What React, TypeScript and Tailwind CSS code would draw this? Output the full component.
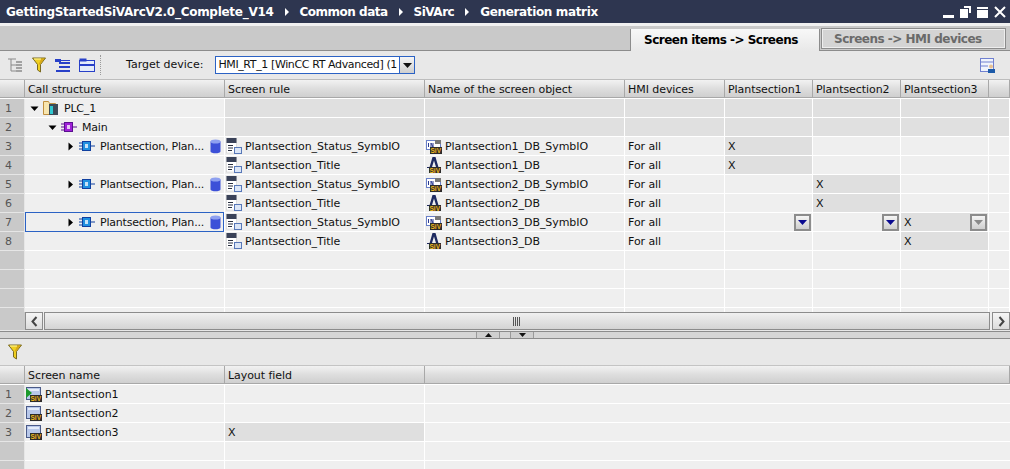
import React from "react";

const font = { fontFamily: '"DejaVu Sans", sans-serif' };

const Caret = ({ open }: { open?: boolean }) => (
  <svg width="9" height="9" viewBox="0 0 9 9" className="shrink-0">
    {open ? <path d="M0.5 2.5h8L4.5 7z" fill="#000" /> : <path d="M2.5 0.5v8L7 4.5z" fill="#000" />}
  </svg>
);

const Sep = () => (
  <svg width="4" height="8" viewBox="0 0 4 8" className="shrink-0 mx-[11px]">
    <path d="M0 0l4 4-4 4z" fill="#fff" />
  </svg>
);

const Siv = ({ x = 0, y = 9, w = 11 }: { x?: number; y?: number; w?: number }) => (
  <g>
    <rect x={x} y={y} width={w} height="7" fill="#2c2c2c" />
    <text x={x + 0.5} y={y + 6} fontSize="6.5" fontWeight="700" fill="#f0b820" fontFamily="Liberation Sans">
      SiV
    </text>
  </g>
);

const PlcIcon = () => (
  <svg width="16" height="16" viewBox="0 0 16 16" className="shrink-0">
    <path d="M0.5 1.5h5l1 2h6v11h-12z" fill="#f8e6b0" stroke="#c09040" />
    <rect x="6" y="4" width="9" height="11" fill="#3c4a58" />
    <rect x="7" y="6" width="3" height="8" fill="#30c8d0" />
  </svg>
);

const BlockIcon = ({ color, dark }: { color: string; dark: string }) => (
  <svg width="16" height="10" viewBox="0 0 16 10" className="shrink-0">
    <path d="M0 2h4M0 5h4M0 8h4M11 5h5" stroke={dark} strokeWidth="1.2" />
    <rect x="3.5" y="0.5" width="8" height="9" fill={color} stroke={dark} />
    <rect x="6" y="3" width="3" height="4" fill="#fff" opacity="0.75" />
  </svg>
);

const DbIcon = () => (
  <svg width="11" height="15" viewBox="0 0 11 15" className="shrink-0">
    <path d="M0.5 2.5v10c0 2.4 10 2.4 10 0v-10z" fill="#3c50d8" />
    <ellipse cx="5.5" cy="2.5" rx="5" ry="2" fill="#8ea0f0" />
  </svg>
);

const RuleIcon = () => (
  <svg width="16" height="16" viewBox="0 0 16 16" className="shrink-0">
    <rect x="0.5" y="0" width="10" height="15" fill="#fff" stroke="#c8c8c8" strokeWidth="0.5" />
    <rect x="0.5" y="0" width="10" height="5" fill="#3a4258" />
    <path d="M2 7.5h5M2 10h5M2 12.5h4" stroke="#2a3040" strokeWidth="1.2" />
    <rect x="8.5" y="9.5" width="7" height="6" fill="#dce6f6" stroke="#5878b8" />
  </svg>
);

const IoIcon = () => (
  <svg width="16" height="16" viewBox="0 0 16 16" className="shrink-0">
    <rect x="0.5" y="2.5" width="14" height="9" fill="#fff" stroke="#6a80c8" />
    <path d="M2.5 5v4M5 9V5l2 4V5" stroke="#2a3a90" fill="none" />
    <rect x="9" y="2" width="6" height="4" fill="#777" />
    <Siv x={4} y={9} w={12} />
  </svg>
);

const TextIcon = () => (
  <svg width="16" height="16" viewBox="0 0 16 16" className="shrink-0">
    <path d="M3 12L6.5 0h3L13 12h-2.4L8 3.5 5.4 12z" fill="#1e2a60" />
    <rect x="1" y="10" width="14" height="1" fill="#1e2a60" />
    <Siv x={3} y={10} w={12} />
  </svg>
);

const ScreenIcon = ({ start }: { start?: boolean }) => (
  <svg width="16" height="15" viewBox="0 0 16 15" className="shrink-0">
    <rect x="0.5" y="0.5" width="14" height="12" fill="#b8c8ea" stroke="#4a5a88" />
    <rect x="2" y="2" width="11" height="2" fill="#e4ecfa" />
    {start && <path d="M0 1l6 5-6 5z" fill="#1c9a2c" />}
    <Siv x={4} y={8} w={12} />
  </svg>
);

const Funnel = () => (
  <svg width="15" height="16" viewBox="0 0 15 16">
    <path d="M0.5 1h13L8.5 7.5V15l-3-2V7.5z" fill="#f0d020" stroke="#7a6a20" />
    <path d="M8 7.5L12.5 1.5H9.5L6.5 7.5z" fill="#d8a818" />
    <path d="M2 2h7" stroke="#fff6a0" />
  </svg>
);

const Cell = ({ hl, soft, children, className = "" }: { hl?: boolean; soft?: boolean; children?: React.ReactNode; className?: string }) => (
  <div
    className={`flex items-center h-[19px] border-r border-b border-white pl-[3px] min-w-0 relative whitespace-nowrap ${
      hl ? "bg-[#dfdfdf]" : soft ? "bg-[#e0e0e0]" : "bg-[#efefef]"
    } ${className}`}
  >
    {children}
  </div>
);

const T = ({ children, className = "" }: { children: React.ReactNode; className?: string }) => (
  <span className={`pt-[2px] tracking-[-0.06px] ${className}`}>{children}</span>
);

const RowNum = ({ n }: { n?: number }) => (
  <div className="h-[19px] bg-[#c9c9c9] border-r border-b border-[#e6e6e6] pl-[5px] pt-[2px] flex items-center text-[#555] text-[11px]">{n}</div>
);

const Head = ({ children }: { children?: React.ReactNode }) => (
  <div className="h-[18px] mb-px flex items-center pl-[3px] pt-[3px] border-r border-b border-[#a8a8a8] whitespace-nowrap tracking-[-0.06px] bg-gradient-to-b from-[#f2f2f2] via-[#dedede] to-[#cfcfcf]">
    {children}
  </div>
);

const DropBtn = ({ dim }: { dim?: boolean }) => (
  <div className="absolute right-[1px] top-[1px] w-[17px] h-[17px] border-2 border-[#8c8c8c] bg-gradient-to-b from-[#f5f5f5] to-[#cfcfcf] flex items-center justify-center">
    <svg width="9" height="5" viewBox="0 0 9 5">
      <path d="M0 0h9L4.5 5z" fill={dim ? "#8a8a8a" : "#0a0a90"} />
    </svg>
  </div>
);

const Tree = ({ indent, icon, label, db, selected }: { indent: number; icon: React.ReactNode; label: string; db?: boolean; selected?: boolean }) => (
  <div className="flex items-center h-[19px] border-r border-b border-white bg-[#efefef] min-w-0 relative whitespace-nowrap">
    <div style={{ width: indent }} className="shrink-0" />
    <Caret open={indent < 30} />
    <div className="ml-[4px] flex items-center">{icon}</div>
    <T className="ml-[5px] flex-1 overflow-hidden !tracking-[-0.2px]">{label}</T>
    {db && (
      <div className="mr-[3px]">
        <DbIcon />
      </div>
    )}
    {selected && <div className="absolute -top-px left-0 right-0 bottom-[-1px] border border-[#2b62c4]" />}
  </div>
);

const topCols = "grid-cols-[25px_200px_200px_200px_100px_88px_88px_88px_21px]";
const matrix = [
  { s: "Plantsection_Status_SymbIO", n: "Plantsection1_DB_SymbIO", io: true, hit: 0 },
  { s: "Plantsection_Title", n: "Plantsection1_DB", io: false, hit: 0 },
  { s: "Plantsection_Status_SymbIO", n: "Plantsection2_DB_SymbIO", io: true, hit: 1 },
  { s: "Plantsection_Title", n: "Plantsection2_DB", io: false, hit: 1 },
  { s: "Plantsection_Status_SymbIO", n: "Plantsection3_DB_SymbIO", io: true, hit: 2 },
  { s: "Plantsection_Title", n: "Plantsection3_DB", io: false, hit: 2 },
];

export default function App() {
  return (
    <div style={font} className="w-[1010px] h-[469px] overflow-hidden bg-[#e8e8e8] text-[11px] text-[#111] flex flex-col">
      {/* title bar */}
      <div className="h-[23px] bg-[#2e3650] text-white flex items-center pl-[6px] text-[12px] font-bold tracking-[-0.5px] whitespace-nowrap shrink-0">
        <span className="tracking-[-0.28px]">GettingStartedSiVArcV2.0_Complete_V14</span>
        <Sep />
        <span>Common data</span>
        <Sep />
        <span>SiVArc</span>
        <Sep />
        <span className="tracking-[-0.35px]">Generation matrix</span>
        <div className="ml-auto mr-[4px] flex items-center gap-[6px]">
          <svg width="11" height="12" viewBox="0 0 11 12"><rect x="0" y="9" width="11" height="3" fill="#fff" /></svg>
          <svg width="11" height="12" viewBox="0 0 11 12"><path d="M4 0h7v7h-2V2H4z" fill="#fff" /><rect x="0" y="3" width="8" height="9" fill="#fff" /></svg>
          <svg width="11" height="12" viewBox="0 0 11 12"><rect x="0" y="1" width="11" height="2" fill="#fff" /><rect x="0" y="4" width="11" height="8" fill="#fff" /></svg>
          <svg width="12" height="12" viewBox="0 0 12 12"><path d="M1 1l10 10M11 1L1 11" stroke="#fff" strokeWidth="2" /></svg>
        </div>
      </div>
      <div className="h-[3px] bg-[#f0f0f0] shrink-0" />

      {/* tab strip */}
      <div className="h-[25px] bg-[#c9c9c9] border-b border-[#8c8c8c] flex justify-end items-end pr-[4px] shrink-0 font-bold text-[12px] tracking-[-0.5px]">
        <div className="h-[22px] w-[190px] -mb-px bg-gradient-to-b from-[#f8f8f8] to-[#e8e8e8] border-l border-r border-[#8c8c8c] flex items-center pl-[13px] text-black">
          Screen items -&gt; Screens
        </div>
        <div className="h-[21px] w-[185px] ml-[1px] mb-[1px] border border-[#8c8c8c] shadow-[inset_0_0_0_1px_#eeeeee] bg-[#d4d4d4] flex items-center pl-[12px] text-[#6a6a6a]">
          Screens -&gt; HMI devices
        </div>
      </div>

      {/* toolbar */}
      <div className="h-[28px] flex items-center pl-[7px] shrink-0">
        <svg width="16" height="15" viewBox="0 0 16 15">
          <path d="M1 1h8M4 1v12h5M4 7h5" stroke="#8a8a8a" fill="none" />
          <path d="M9 4h6M9 7h6M9 10h6M9 13h6" stroke="#8a8a8a" strokeWidth="1.5" />
        </svg>
        <div className="ml-[9px]"><Funnel /></div>
        <svg className="ml-[8px]" width="16" height="15" viewBox="0 0 16 15">
          <rect x="0" y="1" width="6" height="3" fill="#2840c8" />
          <path d="M4 5h11M4 9h11M1 13h14" stroke="#2840c8" strokeWidth="2" />
          <path d="M6 2.5h9" stroke="#2840c8" strokeWidth="1" />
        </svg>
        <svg className="ml-[8px]" width="16" height="14" viewBox="0 0 16 14">
          <rect x="0.5" y="2.5" width="15" height="11" fill="#e4ecfa" stroke="#2840c8" />
          <rect x="0.5" y="0.5" width="7" height="3" fill="#2840c8" />
          <path d="M1 7h14" stroke="#2840c8" strokeWidth="2" />
        </svg>
        <div className="h-[20px] border-l border-dotted border-[#9a9a9a] ml-[5px]" />
        <span className="ml-[25px]">Target device:</span>
        <div className="ml-[12px] w-[200px] h-[18px] border border-[#2b62c4] bg-white flex items-center pl-[2px] whitespace-nowrap overflow-hidden">
          <span className="flex-1 tracking-[-0.38px]">HMI_RT_1 [WinCC RT Advanced] (1</span>
          <div className="w-[15px] h-[16px] border-l border-[#2b62c4] bg-gradient-to-b from-[#f5f5f5] to-[#cfcfcf] flex items-center justify-center shrink-0">
            <svg width="9" height="5" viewBox="0 0 9 5"><path d="M0 0h9L4.5 5z" fill="#111" /></svg>
          </div>
        </div>
        <svg className="ml-auto mr-[15px]" width="15" height="15" viewBox="0 0 15 15">
          <rect x="0.5" y="0.5" width="13" height="13" fill="#f0f4fc" stroke="#7080d0" />
          <path d="M1 4h12M1 8h7" stroke="#7080d0" />
          <circle cx="11" cy="8.5" r="2" fill="#e8c090" />
          <rect x="8" y="11" width="7" height="4" fill="#1c5aa8" />
        </svg>
      </div>

      {/* matrix */}
      <div className={`grid ${topCols} content-start h-[233px] overflow-hidden shrink-0 border-t border-[#bdbdbd] bg-white`}>
        <Head />
        <Head>Call structure</Head>
        <Head>Screen rule</Head>
        <Head>Name of the screen object</Head>
        <Head>HMI devices</Head>
        <Head>Plantsection1</Head>
        <Head>Plantsection2</Head>
        <Head>Plantsection3</Head>
        <Head />

        <RowNum n={1} />
        <Tree indent={5} icon={<PlcIcon />} label="PLC_1" />
        {[0, 1, 2, 3, 4, 5, 6].map((c) => <Cell key={c} soft />)}

        <RowNum n={2} />
        <Tree indent={23} icon={<BlockIcon color="#a020d8" dark="#5a1090" />} label="Main" />
        {[0, 1, 2, 3, 4, 5, 6].map((c) => <Cell key={c} soft />)}

        {matrix.map((row, i) => (
          <React.Fragment key={i}>
            <RowNum n={i + 3} />
            {i % 2 === 0 ? (
              <Tree indent={41} icon={<BlockIcon color="#2090e0" dark="#1040a0" />} label="Plantsection, Plan..." db selected={i === 4} />
            ) : (
              <Cell />
            )}
            <Cell className="!pl-[1px]">
              <RuleIcon />
              <T className="ml-[3px]">{row.s}</T>
            </Cell>
            <Cell className="!pl-[1px]">
              {row.io ? <IoIcon /> : <TextIcon />}
              <T className="ml-[3px]">{row.n}</T>
            </Cell>
            <Cell><T>For all</T></Cell>
            {[0, 1, 2].map((c) => (
              <Cell key={c} hl={row.hit === c}>
                {row.hit === c && <T>X</T>}
                {i === 4 && <DropBtn dim={c === 2} />}
              </Cell>
            ))}
            <Cell />
          </React.Fragment>
        ))}

        {[0, 1, 2, 3].map((r) => (
          <React.Fragment key={r}>
            <RowNum />
            {[0, 1, 2, 3, 4, 5, 6, 7].map((c) => <Cell key={c} />)}
          </React.Fragment>
        ))}
      </div>

      {/* horizontal scrollbar */}
      <div className="h-[18px] flex shrink-0 bg-[#efefef]">
        <div className="w-[25px] bg-[#c9c9c9]" />
        <div className="w-[18px] border border-[#8c8c8c] bg-gradient-to-b from-[#f5f5f5] to-[#dcdcdc] flex items-center justify-center">
          <svg width="7" height="11" viewBox="0 0 7 11"><path d="M5.5 1L1.5 5.5l4 4.5" stroke="#444" strokeWidth="2" fill="none" /></svg>
        </div>
        <div className="flex-1 ml-[1px] border border-[#8c8c8c] bg-gradient-to-b from-[#f0f0f0] to-[#d4d4d4] flex items-center justify-center">
          <svg width="8" height="9" viewBox="0 0 8 9"><path d="M0.5 0v9M2.5 0v9M4.5 0v9M6.5 0v9" stroke="#555" /></svg>
        </div>
        <div className="w-[18px] ml-[2px] border border-[#8c8c8c] bg-gradient-to-b from-[#f5f5f5] to-[#dcdcdc] flex items-center justify-center">
          <svg width="7" height="11" viewBox="0 0 7 11"><path d="M1.5 1l4 4.5-4 4.5" stroke="#444" strokeWidth="2" fill="none" /></svg>
        </div>
      </div>
      <div className="h-[1px] bg-[#e8e8e8] shrink-0" />

      {/* splitter */}
      <div className="h-[8px] bg-[#d6d6d6] border-t border-b border-[#8c8c8c] flex justify-center shrink-0 gap-[10px]">
        <div className="w-[24px] h-[6px] bg-[#cfcfcf] border-x border-[#9a9a9a] flex items-center justify-center">
          <svg width="7" height="4" viewBox="0 0 7 4"><path d="M0 4h7L3.5 0z" fill="#111" /></svg>
        </div>
        <div className="w-[24px] h-[6px] bg-[#cfcfcf] border-x border-[#9a9a9a] flex items-center justify-center">
          <svg width="7" height="4" viewBox="0 0 7 4"><path d="M0 0h7L3.5 4z" fill="#111" /></svg>
        </div>
      </div>

      {/* lower toolbar */}
      <div className="h-[27px] flex items-center pl-[8px] shrink-0 border-b border-[#c4c4c4]">
        <Funnel />
      </div>

      {/* screens table */}
      <div className="grid grid-cols-[25px_200px_200px_585px] shrink-0 bg-white">
        <Head />
        <Head>Screen name</Head>
        <Head>Layout field</Head>
        <Head />
        {["Plantsection1", "Plantsection2", "Plantsection3"].map((name, i) => (
          <React.Fragment key={name}>
            <RowNum n={i + 1} />
            <Cell className="!pl-[1px]">
              <ScreenIcon start={i === 0} />
              <T className="ml-[3px]">{name}</T>
            </Cell>
            <Cell hl={i === 2}>{i === 2 && <T>X</T>}</Cell>
            <Cell className="!border-r-0" />
          </React.Fragment>
        ))}
        {[0, 1, 2].map((r) => (
          <React.Fragment key={r}>
            <RowNum />
            <Cell />
            <Cell />
            <Cell className="!border-r-0" />
          </React.Fragment>
        ))}
      </div>
    </div>
  );
}
